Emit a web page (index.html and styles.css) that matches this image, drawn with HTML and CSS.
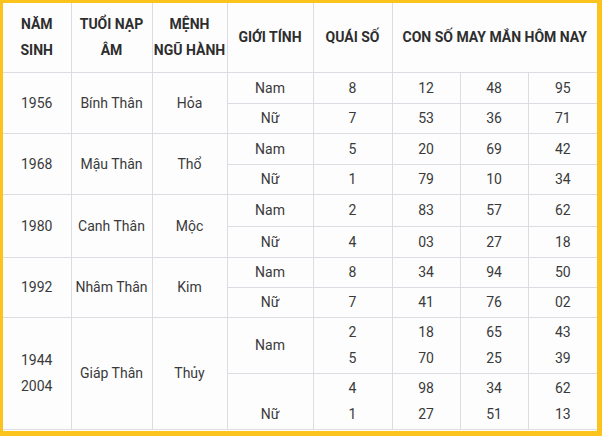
FILE: index.html
```html
<!DOCTYPE html>
<html lang="vi">
<head>
<meta charset="utf-8">
<title>Con số may mắn</title>
<link rel="stylesheet" href="styles.css">
</head>
<body>
<div class="frame">
<table class="lucky">
<colgroup>
<col class="c1"><col class="c2"><col class="c3"><col class="c4"><col class="c5"><col class="c6"><col class="c7"><col class="c8">
</colgroup>
<thead>
<tr class="head">
<th>NĂM<br>SINH</th>
<th>TUỔI NẠP<br>ÂM</th>
<th>MỆNH<br>NGŨ HÀNH</th>
<th>GIỚI TÍNH</th>
<th>QUÁI SỐ</th>
<th colspan="3">CON SỐ MAY MẮN HÔM NAY</th>
</tr>
</thead>
<tbody>
<tr class="h31"><td rowspan="2">1956</td><td rowspan="2">Bính Thân</td><td rowspan="2">Hỏa</td><td>Nam</td><td>8</td><td>12</td><td>48</td><td>95</td></tr>
<tr class="h30"><td>Nữ</td><td>7</td><td>53</td><td>36</td><td>71</td></tr>
<tr class="h31"><td rowspan="2">1968</td><td rowspan="2">Mậu Thân</td><td rowspan="2">Thổ</td><td>Nam</td><td>5</td><td>20</td><td>69</td><td>42</td></tr>
<tr class="h30"><td>Nữ</td><td>1</td><td>79</td><td>10</td><td>34</td></tr>
<tr class="h32"><td rowspan="2">1980</td><td rowspan="2">Canh Thân</td><td rowspan="2">Mộc</td><td>Nam</td><td>2</td><td>83</td><td>57</td><td>62</td></tr>
<tr class="h31"><td>Nữ</td><td>4</td><td>03</td><td>27</td><td>18</td></tr>
<tr class="h30"><td rowspan="2">1992</td><td rowspan="2">Nhâm Thân</td><td rowspan="2">Kim</td><td>Nam</td><td>8</td><td>34</td><td>94</td><td>50</td></tr>
<tr class="h30"><td>Nữ</td><td>7</td><td>41</td><td>76</td><td>02</td></tr>
<tr class="h56"><td rowspan="2">1944<br>2004</td><td rowspan="2">Giáp Thân</td><td rowspan="2">Thủy</td><td>Nam</td><td>2<br>5</td><td>18<br>70</td><td>65<br>25</td><td>43<br>39</td></tr>
<tr class="h56"><td><br>Nữ</td><td>4<br>1</td><td>98<br>27</td><td>34<br>51</td><td>62<br>13</td></tr>
</tbody>
</table>
</div>
</body>
</html>
```
FILE: styles.css
```css
html, body {
  margin: 0;
  padding: 0;
  background: #ffffff;
}

.frame {
  box-sizing: border-box;
  width: 602px;
  height: 436px;
  border-style: solid;
  border-color: #fbc31c;
  border-width: 3px 5px 5px 3px;
  background: #fdfdfe;
  overflow: hidden;
}

.lucky {
  width: 594px;
  table-layout: fixed;
  border-collapse: collapse;
  font-family: Roboto, "Noto Sans", sans-serif;
  font-size: 14px;
  line-height: 26px;
  color: #333333;
}

.c1 { width: 68px; }
.c2 { width: 81px; }
.c3 { width: 75px; }
.c4 { width: 86px; }
.c5 { width: 79px; }
.c6 { width: 68px; }
.c7 { width: 68px; }
.c8 { width: 69px; }

.lucky th,
.lucky td {
  border: 1px solid #dedbe2;
  padding: 0;
  text-align: center;
  vertical-align: middle;
}

.lucky th {
  font-weight: 700;
  color: #2e2e2e;
  border-top: none;
}

.lucky tr > :first-child { border-left: none; }
.lucky tr > :last-child { border-right: none; }
.lucky tbody tr:nth-child(odd) > td:first-child { border-left: none; }

.lucky td { font-weight: 400; color: #3a3a3a; }

.head { height: 69px; }
.h30 { height: 30px; }
.h31 { height: 31px; }
.h32 { height: 32px; }
.h56 { height: 56px; }
```
